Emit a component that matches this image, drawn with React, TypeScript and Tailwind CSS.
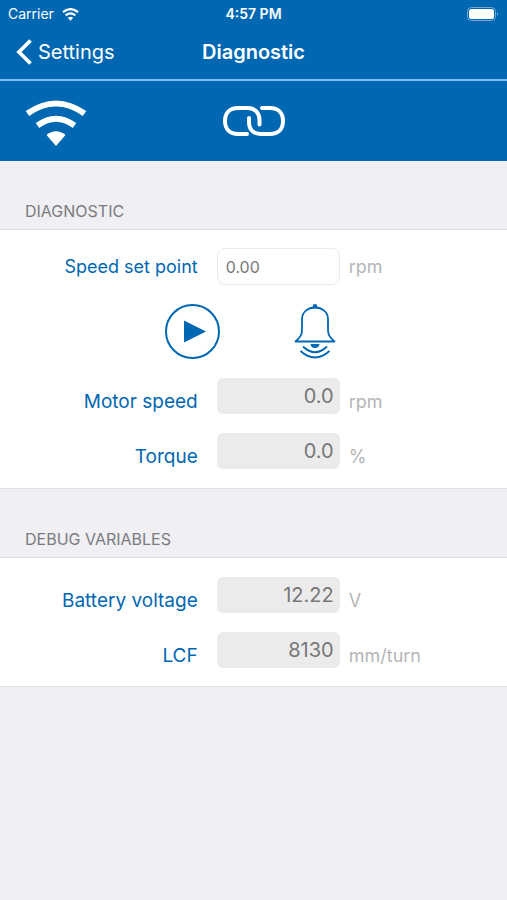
import { useState } from "react";

type ReadingProps = {
  id: string;
  label: string;
  value: string;
  unit: string;
};

function Reading({ id, label, value, unit }: ReadingProps) {
  return (
    <div className="grid grid-cols-[39%_123px_1fr] items-end">
      <label htmlFor={id} className="text-right text-[19px] leading-6 text-[#0067b2]">
        {label}
      </label>
      <input
        id={id}
        readOnly
        value={value}
        className="ml-[19px] h-9 w-full rounded-md bg-[#ebebeb] px-1.5 text-right text-xl text-[#777777] outline-none"
      />
      <span className="ml-7 text-lg leading-6 text-[#b5b5b8]">{unit}</span>
    </div>
  );
}

function SectionTitle({ children }: { children: string }) {
  return (
    <h2 className="px-[25px] pt-10 pb-2 text-base leading-5 text-[#7b7b80]">{children}</h2>
  );
}

export default function App() {
  const [setPoint, setSetPoint] = useState("");

  return (
    <div className="min-h-screen bg-[#efeff4] font-['Inter','Liberation_Sans',sans-serif]">
      <header className="bg-[#0067b2] text-white">
        {/* Status bar */}
        <div className="grid h-7 grid-cols-[1fr_auto_1fr] items-center px-2 text-sm">
          <div className="flex items-center gap-2">
            <span>Carrier</span>
            <svg viewBox="0 0 62 48" className="h-[13px] w-[17px]" fill="none" stroke="currentColor" aria-hidden="true">
              <path d="M3 15Q31 -7 59 15" strokeWidth="8" />
              <path d="M13 27Q31 13 49 27" strokeWidth="8" />
              <path d="M21 36Q31 28 41 36L31 47Z" fill="currentColor" stroke="none" />
            </svg>
          </div>
          <span className="text-center font-semibold">4:57 PM</span>
          <svg viewBox="0 0 32 14" className="h-3.5 w-8 justify-self-end" aria-hidden="true">
            <rect x="0.5" y="0.5" width="28" height="13" rx="4" fill="none" stroke="#75abd5" />
            <rect x="2" y="2" width="25" height="10" rx="2.5" fill="#fff" />
            <path d="M30 5Q32 7 30 9Z" fill="#75abd5" />
          </svg>
        </div>

        {/* Navigation bar */}
        <div className="grid h-[51px] grid-cols-[1fr_auto_1fr] items-center px-4 pb-1">
          <a href="#settings" className="flex items-center gap-1.5 text-xl">
            <svg viewBox="0 0 16 26" className="h-[26px] w-4" fill="none" stroke="currentColor" strokeWidth="3.8" aria-hidden="true">
              <path d="M14.5 1.5L3 13L14.5 24.5" />
            </svg>
            Settings
          </a>
          <h1 className="text-xl font-semibold">Diagnostic</h1>
        </div>

        {/* Connection state */}
        <div className="grid h-[82px] grid-cols-[1fr_auto_1fr] items-center border-t-2 border-[#7fc0f5] px-[25px]">
          <svg viewBox="0 0 62 48" className="mt-1 h-12 w-[62px]" fill="none" stroke="#fff" role="img" aria-label="Wi-Fi">
            <path d="M2.5 14.5Q31 -5.5 59.5 14.5" strokeWidth="6" />
            <path d="M12.5 26.5Q31 13 49.5 26.5" strokeWidth="6" />
            <path d="M21.5 36Q31 28.5 40.5 36L31 47Z" fill="#fff" stroke="none" />
          </svg>
          <svg viewBox="0 0 62 32" className="h-8 w-[62px]" fill="none" stroke="#fff" strokeWidth="4" strokeLinecap="round" role="img" aria-label="Linked">
            <path d="M24 29H15C7 29 2 24 2 16S7 3 15 3H25C32 3 36.5 8 36.5 15V19.500" />
            <path d="M39 3H47C55 3 60 8 60 16S55 29 47 29H38C30 29 26 24 26 17V13" />
          </svg>
        </div>
      </header>

      <main>
        <SectionTitle>DIAGNOSTIC</SectionTitle>
        <section className="flex flex-col gap-[19px] border-y border-[#e0e0e4] bg-white pt-[18px] pb-[19px]">
          <div className="grid grid-cols-[39%_123px_1fr] items-center">
            <label htmlFor="set-point" className="text-right text-lg leading-6 text-[#0067b2]">
              Speed set point
            </label>
            <input
              id="set-point"
              inputMode="decimal"
              placeholder="0.00"
              value={setPoint}
              onChange={(e) => setSetPoint(e.target.value)}
              className="ml-[19px] h-[37px] w-full rounded-lg border border-[#ebebeb] px-2 text-base text-[#777777] placeholder:text-[#777777]"
            />
            <span className="ml-7 text-lg leading-6 text-[#b5b5b8]">rpm</span>
          </div>

          <div className="flex items-center justify-center gap-[74px] pr-1.5">
            <button type="button" aria-label="Start motor">
              <svg viewBox="0 0 55 55" className="size-[55px]">
                <circle cx="27.5" cy="27.5" r="26.5" fill="none" stroke="#0067b2" strokeWidth="2" />
                <path d="M19 16.5L41 27.5L19 38.5Z" fill="#0067b2" />
              </svg>
            </button>
            <button type="button" aria-label="Sound alarm">
              <svg viewBox="0 0 42 55" className="h-[55px] w-[42px]" fill="none" stroke="#0067b2" strokeWidth="1.8">
                <circle cx="21" cy="2.2" r="2.2" fill="#0067b2" stroke="none" />
                <path d="M1.5 37.5C6 33.5 8 31 8 26V15C8 8 14 3.5 21 3.5S34 8 34 15V26C34 31 36 33.5 40.5 37.5Z" strokeLinejoin="round" />
                <path d="M16.5 40H25.5Q25 44 21 44T16.5 40Z" fill="#0067b2" stroke="none" />
                <path d="M9 42.5Q21 54 33 42.5" />
                <path d="M6.500 47Q21 60 35.500 47" />
              </svg>
            </button>
          </div>

          <Reading id="motor-speed" label="Motor speed" value="0.0" unit="rpm" />
          <Reading id="torque" label="Torque" value="0.0" unit="%" />
        </section>

        <SectionTitle>DEBUG VARIABLES</SectionTitle>
        <section className="flex flex-col gap-[19px] border-y border-[#e0e0e4] bg-white pt-[19px] pb-[18px]">
          <Reading id="battery-voltage" label="Battery voltage" value="12.22" unit="V" />
          <Reading id="lcf" label="LCF" value="8130" unit="mm/turn" />
        </section>
      </main>
    </div>
  );
}
